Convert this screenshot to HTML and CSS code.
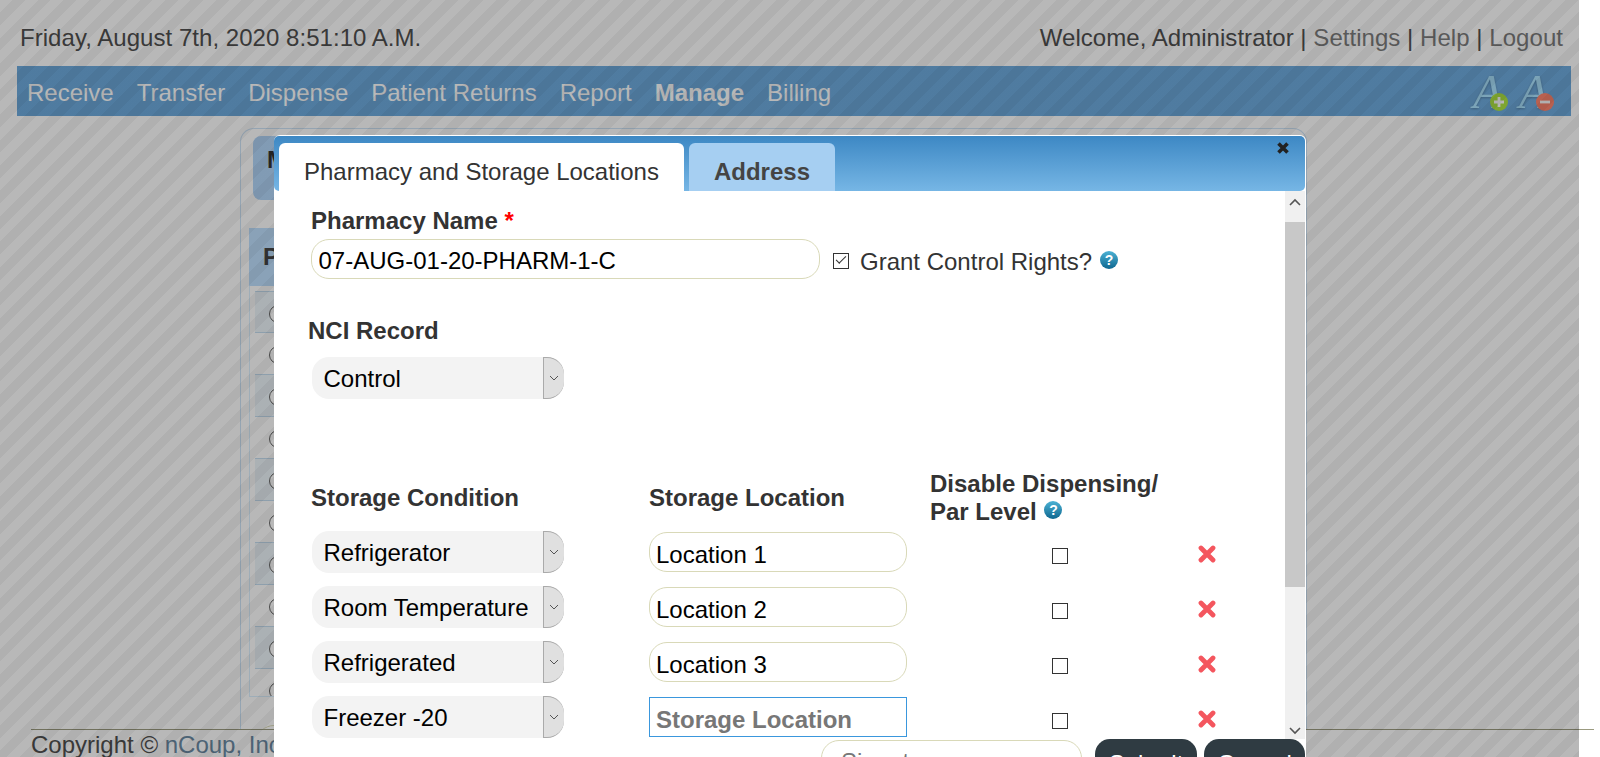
FILE: index.html
```html
<!DOCTYPE html>
<html lang="en">
<head>
    <meta charset="UTF-8">
    <title>Pharmacy and Storage Locations</title>
    <link rel="stylesheet" href="styles.css">
</head>
<body>
    <div class="page">
        <div class="top-bar">
            <span>Friday, August 7th, 2020 8:51:10 A.M.</span>
            <span>Welcome, Administrator | <a href="#">Settings</a> | <a href="#">Help</a> | <a href="#">Logout</a></span>
        </div>

        <div class="nav">
            <a href="#">Receive</a>
            <a href="#">Transfer</a>
            <a href="#">Dispense</a>
            <a href="#">Patient Returns</a>
            <a href="#">Report</a>
            <a href="#" class="active">Manage</a>
            <a href="#">Billing</a>
            <div class="font-tools">
                <svg class="font-icon" width="38" height="42" viewBox="0 0 38 42">
                    <text x="2" y="38" class="font-a">A</text>
                    <circle cx="28" cy="32" r="9" fill="#afe543"/>
                    <path d="M28 27v10M23 32h10" stroke="#fff" stroke-width="2.8"/>
                </svg>
                <svg class="font-icon" width="38" height="42" viewBox="0 0 38 42">
                    <text x="2" y="38" class="font-a">A</text>
                    <circle cx="28" cy="32" r="9" fill="#ff856e"/>
                    <path d="M23 32h10" stroke="#fff" stroke-width="2.8"/>
                </svg>
            </div>
        </div>

        <div class="card">
            <div class="card-title">M</div>
            <div class="panel">
                <div class="panel-head">P</div>
                <div class="panel-rows">
                    <div class="panel-row"><i class="radio"></i></div>
                    <div class="panel-row"><i class="radio"></i></div>
                    <div class="panel-row"><i class="radio"></i></div>
                    <div class="panel-row"><i class="radio"></i></div>
                    <div class="panel-row"><i class="radio"></i></div>
                    <div class="panel-row"><i class="radio"></i></div>
                    <div class="panel-row"><i class="radio"></i></div>
                    <div class="panel-row"><i class="radio"></i></div>
                    <div class="panel-row"><i class="radio"></i></div>
                    <div class="panel-row"><i class="radio"></i></div>
                </div>
            </div>
            <div class="card-search"></div>
        </div>

        <div class="footer">Copyright &copy; <a href="#">nCoup, Inc.</a></div>
    </div>

    <div class="overlay"></div>

    <div class="modal">
        <div class="modal-title">
            <div class="tab tab-on">Pharmacy and Storage Locations</div>
            <div class="tab tab-off">Address</div>
            <svg class="modal-close" width="12" height="12" viewBox="0 0 12 12">
                <path d="M1.5 1.5l9 9M10.5 1.5l-9 9" stroke="#222" stroke-width="3.6"/>
            </svg>
        </div>

        <div class="modal-scroll">
            <div class="modal-form">
                <label class="lbl lbl-shift">Pharmacy Name <span class="req">*</span></label>
                <div class="name-row">
                    <input class="txt name-input" type="text" value="07-AUG-01-20-PHARM-1-C">
                    <input class="chk grant-chk" type="checkbox" checked>
                    <span class="grant-text">Grant Control Rights?</span>
                    <span class="help help-grant">?</span>
                </div>

                <label class="lbl nci-lbl">NCI Record</label>
                <div class="sel nci-sel">
                    <select><option>Control</option></select>
                    <span class="sel-arrow"><svg width="10" height="6" viewBox="0 0 10 6"><path d="M1 1l4 4 4-4" fill="none" stroke="#555"/></svg></span>
                </div>

                <div class="loc-row loc-head">
                    <span class="lbl lbl-shift">Storage Condition</span>
                    <span class="lbl">Storage Location</span>
                    <span class="lbl">Disable Dispensing/<br>Par Level <span class="help help-head">?</span></span>
                </div>

                <div class="loc-row">
                    <div class="sel">
                        <select><option>Refrigerator</option></select>
                        <span class="sel-arrow"><svg width="10" height="6" viewBox="0 0 10 6"><path d="M1 1l4 4 4-4" fill="none" stroke="#555"/></svg></span>
                    </div>
                    <input class="txt loc-input" type="text" value="Location 1">
                    <input class="chk loc-chk" type="checkbox">
                    <svg class="del" width="18" height="18" viewBox="0 0 18 18"><path d="M3 3l12 12M15 3L3 15" stroke="#f4565e" stroke-width="4.8" stroke-linecap="round"/></svg>
                </div>
                <div class="loc-row">
                    <div class="sel">
                        <select><option>Room Temperature</option></select>
                        <span class="sel-arrow"><svg width="10" height="6" viewBox="0 0 10 6"><path d="M1 1l4 4 4-4" fill="none" stroke="#555"/></svg></span>
                    </div>
                    <input class="txt loc-input" type="text" value="Location 2">
                    <input class="chk loc-chk" type="checkbox">
                    <svg class="del" width="18" height="18" viewBox="0 0 18 18"><path d="M3 3l12 12M15 3L3 15" stroke="#f4565e" stroke-width="4.8" stroke-linecap="round"/></svg>
                </div>
                <div class="loc-row">
                    <div class="sel">
                        <select><option>Refrigerated</option></select>
                        <span class="sel-arrow"><svg width="10" height="6" viewBox="0 0 10 6"><path d="M1 1l4 4 4-4" fill="none" stroke="#555"/></svg></span>
                    </div>
                    <input class="txt loc-input" type="text" value="Location 3">
                    <input class="chk loc-chk" type="checkbox">
                    <svg class="del" width="18" height="18" viewBox="0 0 18 18"><path d="M3 3l12 12M15 3L3 15" stroke="#f4565e" stroke-width="4.8" stroke-linecap="round"/></svg>
                </div>
                <div class="loc-row">
                    <div class="sel">
                        <select><option>Freezer -20</option></select>
                        <span class="sel-arrow"><svg width="10" height="6" viewBox="0 0 10 6"><path d="M1 1l4 4 4-4" fill="none" stroke="#555"/></svg></span>
                    </div>
                    <input class="txt loc-input loc-focus" type="text" placeholder="Storage Location">
                    <input class="chk loc-chk" type="checkbox">
                    <svg class="del" width="18" height="18" viewBox="0 0 18 18"><path d="M3 3l12 12M15 3L3 15" stroke="#f4565e" stroke-width="4.8" stroke-linecap="round"/></svg>
                </div>
            </div>

            <div class="scrollbar">
                <div class="scroll-btn"><svg width="12" height="8" viewBox="0 0 12 8"><path d="M1 7l5-5 5 5" fill="none" stroke="#555" stroke-width="1.6"/></svg></div>
                <div class="scroll-thumb"></div>
                <div class="scroll-rest"></div>
                <div class="scroll-btn scroll-btn-down"><svg width="12" height="8" viewBox="0 0 12 8"><path d="M1 1l5 5 5-5" fill="none" stroke="#555" stroke-width="1.6"/></svg></div>
            </div>
        </div>

        <div class="modal-foot">
            <input class="txt sign-input" type="text" placeholder="Signature">
            <button type="button" class="btn btn-submit">Submit</button>
            <button type="button" class="btn btn-cancel">Cancel</button>
        </div>
    </div>
</body>
</html>
```

FILE: styles.css
```css
html, body {
    margin: 0;
    padding: 0;
    height: 757px;
    overflow: hidden;
    background: #fff;
}
body {
    position: relative;
    font-family: "Liberation Sans", Arial, sans-serif;
    font-size: 24px;
    color: #505050;
}
a {
    text-decoration: none;
}
.page {
    width: 1579px;
}
.top-bar {
    display: flex;
    justify-content: space-between;
    box-sizing: border-box;
    height: 66px;
    padding: 24px 16px 0 20px;
    line-height: 28px;
    letter-spacing: 0.04px;
}
.top-bar a {
    color: #7d7d7d;
}
.nav {
    display: flex;
    align-items: center;
    gap: 23px;
    box-sizing: border-box;
    height: 50px;
    margin: 0 8px 0 17px;
    padding: 4px 0 0 10px;
    background: #6eabde;
}
.nav a {
    color: #fff;
}
.nav a.active {
    font-weight: bold;
}
.font-tools {
    display: flex;
    gap: 8px;
    margin: -4px 16px 0 auto;
}
.font-icon {
    display: block;
    overflow: visible;
}
.font-a {
    font-family: "Liberation Serif", serif;
    font-style: italic;
    font-size: 48px;
    fill: #abe3ff;
    filter: drop-shadow(0 1px 1px rgba(0, 0, 0, 0.25));
}
.card {
    box-sizing: border-box;
    width: 1067px;
    height: 601px;
    margin: 12px 0 0 240px;
    padding: 7px 0 0 8px;
    border: 1px solid #cde3f7;
    border-bottom: 0;
    border-radius: 14px 14px 0 0;
    overflow: hidden;
}
.card-title {
    box-sizing: border-box;
    width: 900px;
    height: 64px;
    margin-left: 4px;
    padding: 10px 14px;
    border-radius: 8px;
    background: #b3d7fa;
    font-weight: bold;
    color: #333;
}
.panel {
    box-sizing: border-box;
    width: 1040px;
    height: 469px;
    margin-top: 28px;
    overflow: hidden;
}
.panel-head {
    box-sizing: border-box;
    height: 58px;
    padding: 15px 14px;
    background: #bfe0ff;
    font-weight: bold;
    color: #444;
}
.panel-rows {
    height: 405px;
    padding: 5px 0 0 5px;
    border: 1px solid #dbf0ff;
    border-top: 0;
    overflow: hidden;
}
.panel-row {
    display: flex;
    align-items: center;
    box-sizing: border-box;
    height: 42px;
    padding-left: 14px;
    border-bottom: 1px solid #c4dcef;
}
.panel-row:nth-child(odd) {
    background: #edf5fa;
}
.panel-row:first-child {
    border-top: 1px solid #c4dcef;
}
.radio {
    display: block;
    box-sizing: border-box;
    width: 18px;
    height: 18px;
    margin-top: 3px;
    border: 1px solid #666;
    border-radius: 50%;
    background: #fff;
}
.card-search {
    width: 300px;
    height: 40px;
    margin: 28px 0 0 7px;
    border: 1px solid #d9d9b8;
    border-radius: 18px;
}
.footer {
    width: 1563px;
    margin-left: 31px;
    padding-top: 1px;
    border-top: 1px solid #9b9b80;
    line-height: 28px;
}
.footer a {
    color: #6b8aa3;
}
.overlay {
    position: absolute;
    left: 0;
    top: 0;
    width: 1579px;
    height: 757px;
    background: repeating-linear-gradient(135deg, rgba(0, 0, 0, 0.28) 0 9px, rgba(0, 0, 0, 0.31) 9px 18px);
}
.modal {
    position: absolute;
    left: 274px;
    top: 135px;
    box-sizing: border-box;
    width: 1032px;
    height: 640px;
    padding: 1px 1px 0 0;
    background: #fff;
    border-radius: 6px;
}
.modal-title {
    position: relative;
    display: flex;
    align-items: flex-end;
    gap: 5px;
    box-sizing: border-box;
    height: 55px;
    padding-left: 5px;
    background: linear-gradient(#3d88c4, #76b6e5);
    border-radius: 5px;
}
.tab {
    box-sizing: border-box;
    height: 48px;
    padding-top: 4px;
    line-height: 50px;
    border-radius: 6px 6px 0 0;
}
.tab-on {
    width: 405px;
    padding-left: 25px;
    background: #fff;
    color: #333;
}
.tab-off {
    width: 146px;
    text-align: center;
    background: #a6cff2;
    color: #444;
    font-weight: bold;
}
.modal-close {
    position: absolute;
    right: 16px;
    top: 6px;
}
.modal-scroll {
    display: flex;
    height: 548px;
    overflow: hidden;
}
.modal-form {
    flex: 1;
    padding: 16px 0 0 38px;
    color: #333;
}
.lbl {
    display: block;
    font-weight: bold;
    line-height: 28px;
}
.lbl-shift {
    margin-left: -1px;
}
.req {
    color: #f00;
}
.name-row {
    display: flex;
    align-items: center;
    margin: 4px 0 0 -1px;
}
.txt {
    box-sizing: border-box;
    height: 40px;
    padding: 3px 6px 0;
    border: 1px solid #d9d9b8;
    border-radius: 18px;
    background: #fff;
    font: 24px "Liberation Sans", Arial, sans-serif;
    color: #000;
    outline: none;
}
.name-input {
    width: 509px;
    padding-left: 6.5px;
}
.chk {
    appearance: none;
    box-sizing: border-box;
    display: block;
    width: 16px;
    height: 16px;
    margin: 0;
    border: 1px solid #333;
    background: #fff;
}
.chk:checked::after {
    content: "";
    display: block;
    width: 9px;
    height: 4px;
    margin: 2px 0 0 2px;
    border-left: 1px solid #333;
    border-bottom: 1px solid #333;
    transform: rotate(-45deg);
}
.grant-chk {
    margin: 3px 11px 0 13px;
}
.grant-text {
    margin-top: 5px;
}
.help {
    display: inline-block;
    box-sizing: border-box;
    width: 18px;
    height: 18px;
    border-radius: 50%;
    background: linear-gradient(#4cb2d4, #0e6790);
    color: #fff;
    font-size: 14px;
    font-weight: bold;
    line-height: 18px;
    text-align: center;
    vertical-align: middle;
}
.help-grant {
    margin: 1px 0 0 8px;
}
.help-head {
    margin: 0 0 7px 1px;
}
.nci-lbl {
    margin: 38px 0 12px -4px;
}
.sel {
    position: relative;
    width: 252px;
    height: 42px;
}
.sel select {
    appearance: none;
    display: block;
    box-sizing: border-box;
    width: 100%;
    height: 100%;
    padding: 0 0 0 11.5px;
    border: 0;
    border-radius: 17px;
    background: #f3f3f3;
    font: 24px "Liberation Sans", Arial, sans-serif;
    color: #000;
}
.sel-arrow {
    position: absolute;
    right: 0;
    top: 0;
    display: flex;
    align-items: center;
    justify-content: center;
    box-sizing: border-box;
    width: 21px;
    height: 42px;
    border: 1px solid #aaa;
    border-right: 0;
    border-radius: 0 17px 17px 0;
    background: #e0e0e0;
}
.nci-sel {
    margin-bottom: 71px;
}
.loc-row {
    display: grid;
    grid-template-columns: 337px 281px 260px auto;
    align-items: center;
    margin-bottom: 13px;
}
.loc-head {
    margin-bottom: 5px;
}
.loc-input {
    width: 258px;
    padding-top: 5px;
}
.loc-focus {
    border-color: #3a97dd;
    border-radius: 0;
}
.loc-focus::placeholder {
    color: #777;
    font-weight: bold;
}
.sign-input::placeholder {
    color: #777;
}
.loc-chk {
    justify-self: center;
    margin-top: 8px;
}
.del {
    margin: 4px 0 0 8px;
}
.scrollbar {
    display: flex;
    flex-direction: column;
    width: 20px;
    background: #f0f0f0;
}
.scroll-btn {
    display: flex;
    justify-content: center;
    align-items: center;
    height: 31px;
    padding-bottom: 10px;
    box-sizing: border-box;
}
.scroll-btn-down {
    height: 21px;
    padding: 5px 0 0;
}
.scroll-thumb {
    height: 365px;
    background: #c8c8c8;
}
.scroll-rest {
    flex: 1;
}
.modal-foot {
    display: flex;
    justify-content: flex-end;
    align-items: flex-start;
    gap: 7px;
}
.sign-input {
    width: 261px;
    margin: 1px 6px 0 0;
    padding-left: 19px;
}
.btn {
    height: 50px;
    padding: 0;
    border: 0;
    border-radius: 15px;
    background: #2f3b42;
    color: #fff;
    font: 24px "Liberation Sans", Arial, sans-serif;
}
.btn-submit {
    width: 102px;
}
.btn-cancel {
    width: 101px;
}
```
